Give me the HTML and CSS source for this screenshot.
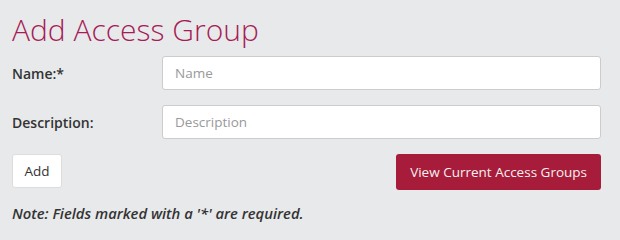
FILE: index.html
```html
<!DOCTYPE html>
<html>
<head>
<meta charset="utf-8">
<link rel="stylesheet" href="styles.css">
</head>
<body>
<div class="panel">
  <h1 class="title">Add Access Group</h1>
  <form class="form">
    <div class="row">
      <label class="label">Name:*</label>
      <input class="field" type="text" placeholder="Name">
    </div>
    <div class="row">
      <label class="label">Description:</label>
      <input class="field" type="text" placeholder="Description">
    </div>
    <div class="actions">
      <button type="button" class="btn btn-add">Add</button>
      <button type="button" class="btn btn-view">View Current Access Groups</button>
    </div>
    <p class="note">Note: Fields marked with a '*' are required.</p>
  </form>
</div>
</body>
</html>
```
FILE: styles.css
```css
html, body {
  margin: 0;
  padding: 0;
  background: #e8e9eb;
}
body {
  font-family: "Open Sans", sans-serif;
  color: #333;
}
.panel {
  width: 589px;
  padding: 10px 19px 12px 12px;
}
.title {
  margin: 0;
  font-weight: 300;
  font-size: 30px;
  line-height: 40px;
  color: #a61c55;
}
.form {
  margin: 6px 0 0;
}
.row {
  display: flex;
  align-items: center;
  margin-bottom: 15px;
}
.label {
  width: 150px;
  font-weight: 600;
  font-size: 14px;
  color: #333;
}
.field {
  flex: 1;
  box-sizing: border-box;
  height: 34px;
  padding: 0 12px;
  border: 1px solid #ccc;
  border-radius: 3px;
  background: #fff;
  font-family: "Open Sans", sans-serif;
  font-size: 13.5px;
  color: #333;
}
.field::placeholder {
  color: #999;
}
.actions {
  display: flex;
  justify-content: space-between;
  align-items: flex-start;
}
.btn {
  box-sizing: border-box;
  font-family: "Open Sans", sans-serif;
  font-size: 13.5px;
  border-radius: 3px;
  cursor: pointer;
}
.btn-add {
  height: 34px;
  width: 50px;
  padding: 0;
  background: #fff;
  border: 1px solid #ddd;
  color: #333;
}
.btn-view {
  height: 36px;
  padding: 0 14px;
  background: #a61c3a;
  border: none;
  color: #f8f0f0;
}
.note {
  margin: 13px 0 0;
  font-size: 14.8px;
  font-weight: 600;
  font-style: italic;
  color: #333;
}
```
